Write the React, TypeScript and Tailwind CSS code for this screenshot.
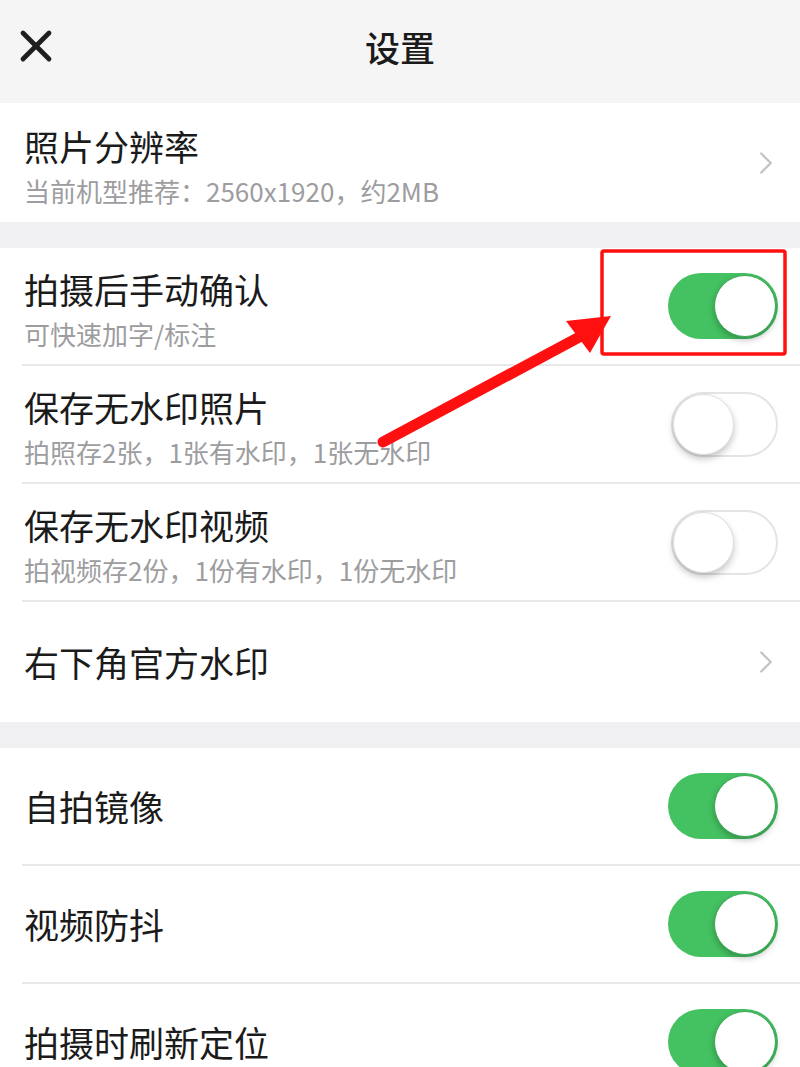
import { X, ChevronRight } from 'lucide-react';

type Row = {
  title: string;
  sub?: string;
  kind: 'on' | 'off' | 'chevron';
  h: string;
  last?: boolean;
};

const sections: Row[][] = [
  [{ title: '照片分辨率', sub: '当前机型推荐：2560x1920，约2MB', kind: 'chevron', h: 'h-[119px]', last: true }],
  [
    { title: '拍摄后手动确认', sub: '可快速加字/标注', kind: 'on', h: 'h-[118px]' },
    { title: '保存无水印照片', sub: '拍照存2张，1张有水印，1张无水印', kind: 'off', h: 'h-[118px]' },
    { title: '保存无水印视频', sub: '拍视频存2份，1份有水印，1份无水印', kind: 'off', h: 'h-[118px]' },
    { title: '右下角官方水印', kind: 'chevron', h: 'h-[120px]', last: true },
  ],
  [
    { title: '自拍镜像', kind: 'on', h: 'h-[118px]' },
    { title: '视频防抖', kind: 'on', h: 'h-[118px]' },
    { title: '拍摄时刷新定位', kind: 'on', h: 'h-[118px]' },
  ],
];

function Toggle({ on }: { on: boolean }) {
  if (on) {
    return (
      <div className="relative w-[110px] h-[66px] rounded-full bg-[#44c161] shrink-0">
        <div className="absolute right-[2px] top-[2px] w-[62px] h-[62px] rounded-full bg-white border border-[#3aa955] shadow-[0_3px_6px_rgba(0,0,0,0.25)]" />
      </div>
    );
  }
  return (
    <div className="relative w-[107px] h-[65px] rounded-full bg-white border-2 border-[#e4e4e4] shrink-0">
      <div className="absolute left-0 top-0 w-[61px] h-[61px] rounded-full bg-white border border-[#dedede] shadow-[0_4px_7px_rgba(0,0,0,0.22)]" />
    </div>
  );
}

function SettingRow({ row }: { row: Row }) {
  return (
    <div className={`${row.h} pl-[22px] bg-white`}>
      <div
        className={`h-full flex items-center justify-between pr-[22px] ${
          row.last ? '' : 'border-b-2 border-[#e8e8e8]'
        }`}
      >
        <div className={`flex flex-col pl-[2px] ${row.sub ? 'pt-[6px]' : ''}`}>
          <span className="text-[35px] leading-[42px] text-[#1b1b1b]">{row.title}</span>
          {row.sub && (
            <span className="mt-[8px] text-[26px] leading-[32px] text-[#9d9d9f]">{row.sub}</span>
          )}
        </div>
        {row.kind === 'chevron' ? (
          <ChevronRight size={38} strokeWidth={1.5} className="text-[#c4c4c8] -mr-[7px]" />
        ) : (
          <Toggle on={row.kind === 'on'} />
        )}
      </div>
    </div>
  );
}

export default function App() {
  return (
    <div
      className="relative w-[800px] h-[1067px] overflow-hidden bg-[#f0f0f2]"
      style={{ fontFamily: '"Noto Sans CJK SC", "Noto Sans", sans-serif' }}
    >
      {/* header */}
      <div className="relative h-[103px] bg-[#f5f5f5] flex items-center justify-center">
        <X size={52} strokeWidth={2.2} className="absolute left-[10px] top-[20px] text-[#1e1e1e]" />
        <span className="text-[35px] font-medium text-[#1b1b1b] -mt-[8px]">设置</span>
      </div>

      <div className="flex flex-col gap-[26px]">
        {sections.map((sec, i) => (
          <div key={i} className="flex flex-col">
            {sec.map((row) => (
              <SettingRow key={row.title} row={row} />
            ))}
          </div>
        ))}
      </div>

      {/* red annotation */}
      <svg className="absolute left-0 top-0 pointer-events-none" width="800" height="1067">
        <rect x="602" y="251" width="183" height="103" fill="none" stroke="#ff1010" strokeWidth="3.5" rx="2" />
        <line x1="383" y1="442" x2="585" y2="334" stroke="#ff1010" strokeWidth="11" strokeLinecap="round" />
        <polygon points="611,316 566,321 590,353" fill="#ff1010" />
      </svg>
    </div>
  );
}
